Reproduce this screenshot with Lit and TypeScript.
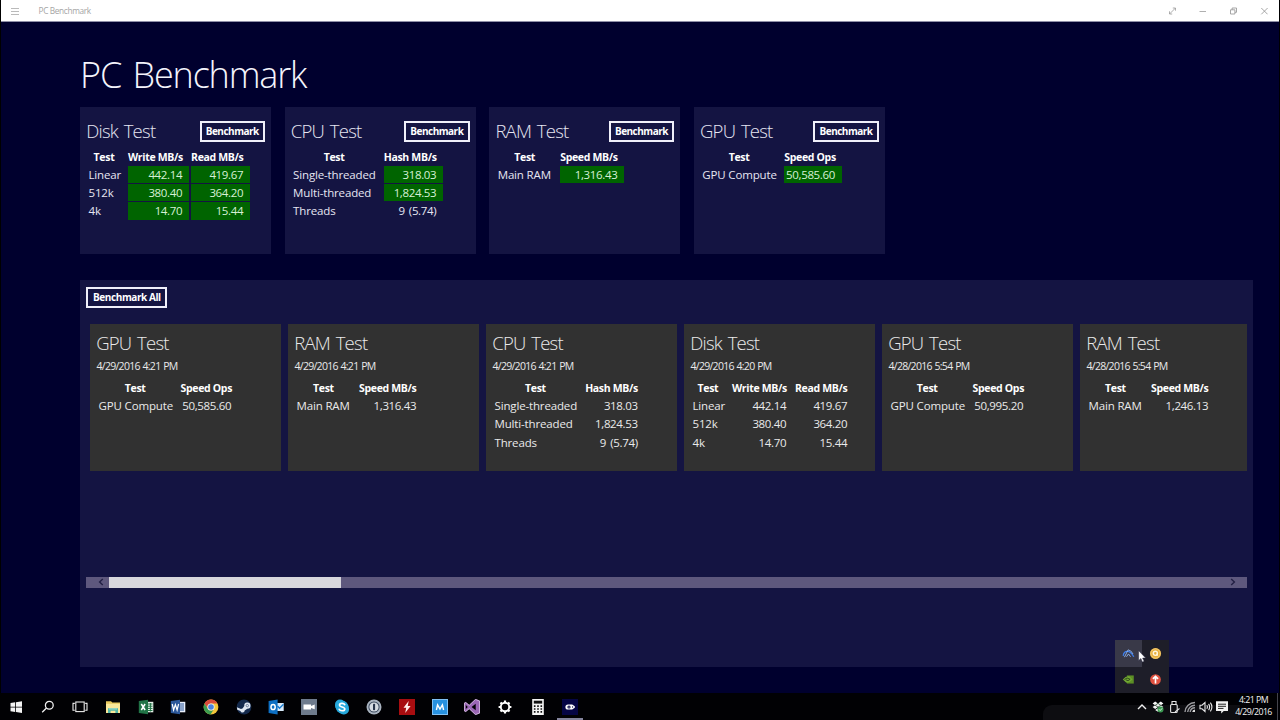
import { LitElement, html, css, svg, nothing } from "lit";
import { customElement, property } from "lit/decorators.js";
import { classMap } from "lit/directives/class-map.js";

type Kind = "disk" | "cpu" | "ram" | "gpu";
interface Row { label: string; values: string[]; plain?: boolean; }
interface Result { kind: Kind; title: string; date?: string; heads: string[]; rows: Row[]; }

const disk: Result = {
  kind: "disk", title: "Disk Test", heads: ["Write MB/s", "Read MB/s"],
  rows: [
    { label: "Linear", values: ["442.14", "419.67"] },
    { label: "512k", values: ["380.40", "364.20"] },
    { label: "4k", values: ["14.70", "15.44"] },
  ],
};
const cpu: Result = {
  kind: "cpu", title: "CPU Test", heads: ["Hash MB/s"],
  rows: [
    { label: "Single-threaded", values: ["318.03"] },
    { label: "Multi-threaded", values: ["1,824.53"] },
    { label: "Threads", values: ["9 (5.74)"], plain: true },
  ],
};
const ram = (v: string): Result => ({
  kind: "ram", title: "RAM Test", heads: ["Speed MB/s"], rows: [{ label: "Main RAM", values: [v] }],
});
const gpu = (v: string): Result => ({
  kind: "gpu", title: "GPU Test", heads: ["Speed Ops"], rows: [{ label: "GPU Compute", values: [v] }],
});

const current = [disk, cpu, ram("1,316.43"), gpu("50,585.60")];
const history: Result[] = [
  { ...gpu("50,585.60"), date: "4/29/2016 4:21 PM" },
  { ...ram("1,316.43"), date: "4/29/2016 4:21 PM" },
  { ...cpu, date: "4/29/2016 4:21 PM" },
  { ...disk, date: "4/29/2016 4:20 PM" },
  { ...gpu("50,995.20"), date: "4/28/2016 5:54 PM" },
  { ...ram("1,246.13"), date: "4/28/2016 5:54 PM" },
];

@customElement("result-card")
class ResultCard extends LitElement {
  @property({ attribute: false }) result!: Result;

  static styles = css`
    :host { display: block; flex: none; width: 191px; height: 146.5px; box-sizing: border-box; }
    .card { height: 100%; background: #141442; color: #e6e6f2; }
    .card.past { background: #313131; color: #eaeaea; }
    .top { display: flex; justify-content: space-between; align-items: center; height: 21px; padding: 13.5px 6px 0 6.2px; }
    .past .top { padding-top: 8px; }
    .title { font-size: 18.5px; font-weight: 300; line-height: 21px; letter-spacing: -0.75px; word-spacing: 1.6px; white-space: nowrap; margin-bottom: 1.4px; }
    .past .title { margin-bottom: 0; }
    .btn { box-sizing: border-box; width: 65.5px; height: 21px; border: 2px solid #f0f0fa; color: #fff; font: 700 10px/17px "Open Sans", sans-serif; letter-spacing: -0.5px; text-align: center; padding: 0; background: none; }
    .date { font-size: 10.5px; letter-spacing: -0.72px; word-spacing: 0.8px; line-height: 14px; padding: 6.2px 0 0 6.5px; }
    .table { display: grid; grid-template-rows: 15.5px; grid-auto-rows: 17.3px; row-gap: 1px; column-gap: 2px; padding-top: 7.8px; font-size: 11.5px; letter-spacing: -0.15px; line-height: 17.3px; white-space: nowrap; }
    .past .table { padding-top: 7.4px; }
    .disk { grid-template-columns: 46px 61px 59px; }
    .cpu { grid-template-columns: 97px 59.5px; }
    .ram { grid-template-columns: 69px 64px; }
    .gpu { grid-template-columns: 88.5px 57.5px; }
    .head { font-weight: 700; font-size: 10.5px; letter-spacing: -0.32px; line-height: 17px; text-align: right; padding-right: 6.5px; color: #fff; }
    .past .head { line-height: 15.5px; }
    .head.first { text-align: center; padding: 0 0 0 2px; }
    .label { padding-left: 8.5px; }
    .num { text-align: right; padding-right: 6.8px; letter-spacing: -0.35px; word-spacing: 1.6px; }
    .good { background: #006400; color: #d6f0d6; }
  `;

  render() {
    const r = this.result;
    const past = !!r.date;
    return html`<div class=${classMap({ card: true, past })}>
      <div class="top"><div class="title">${r.title}</div>${past ? nothing : html`<button class="btn">Benchmark</button>`}</div>
      ${past ? html`<div class="date">${r.date}</div>` : nothing}
      <div class="table ${r.kind}">
        <div class="head first">Test</div>
        ${r.heads.map((h) => html`<div class="head">${h}</div>`)}
        ${r.rows.map((row) => html`<div class="label">${row.label}</div>${row.values.map(
          (v) => html`<div class=${classMap({ num: true, good: !past && !row.plain })}>${v}</div>`)}`)}
      </div>
    </div>`;
  }
}

const icon = (body: unknown, size = 16) =>
  html`<svg width=${size} height=${size} viewBox="0 0 16 16" fill="none">${body}</svg>`;

const apps = [
  svg`<path fill="#f4f4f4" d="M2.5 4 7.2 3.3V7.7H2.5ZM8 3.2 14 2.3V7.7H8ZM2.5 8.5H7.2V13L2.5 12.3ZM8 8.5H14V13.9L8 13.1Z"/>`,
  svg`<g stroke="#f0f0f0" stroke-width="1.3"><circle cx="9.3" cy="6.2" r="3.9"/><path d="M6.5 9 2.2 13.3"/></g>`,
  svg`<g stroke="#ececec" stroke-width="1.1"><rect x="3.8" y="3" width="8.4" height="9.6"/><path d="M2.8 4.4H1V11.3H2.8M13.2 4.4H15V11.3H13.2"/></g>`,
  svg`<path fill="#e9c95c" d="M1 2.2H6L7.3 3.5H15V14H1Z"/><path fill="#fae89a" d="M1 4.8H15V14H1Z"/><path fill="#54b8a8" d="M3 9.3H13V14H10.4V11.8H5.6V14H3Z"/><path fill="#9fdccb" d="M4 9.3H12V10.5H4Z"/>`,
  svg`<path fill="#e8f3eb" d="M9 2.8H15.3V13.3H9Z"/><path stroke="#217346" d="M10 5H14.5M10 7.2H14.5M10 9.4H14.5M10 11.5H14.5M12.4 4V12.5"/><path fill="#217346" d="M.8 2 10 .7V15.3L.8 14Z"/><path stroke="#fff" stroke-width="1.5" d="m3.3 5 3.8 6M7.1 5l-3.8 6"/>`,
  svg`<path fill="#e8eefb" d="M9 2.8H15.3V13.3H9Z"/><path stroke="#2b579a" d="M10 5H14M10 7H14M10 9H14M10 11H14"/><path fill="#2b579a" d="M.8 2 10 .7V15.3L.8 14Z"/><path stroke="#fff" stroke-width="1.2" d="m2.2 5 1.4 6 1.8-5.4 1.7 5.4L8.6 5"/>`,
  svg`<circle cx="8" cy="8" r="7.4" fill="#f3c63b"/><path fill="#d94a3d" d="M1.5 4.4A7.4 7.4 0 0 1 14.5 4.4H8A3.6 3.6 0 0 0 4.8 9.7Z"/><path fill="#3b9c50" d="M1.5 4.4A7.4 7.4 0 0 0 7.5 15.4L11 10A3.6 3.6 0 0 1 4.8 9.7Z"/><circle cx="8" cy="8" r="3.6" fill="#f4f4f4"/><circle cx="8" cy="8" r="2.8" fill="#4a83df"/>`,
  svg`<circle cx="8" cy="8" r="7.4" fill="#142a4d"/><path fill="#dfe7f2" d="M.9 8.2 5 10a2.3 2.3 0 0 1 1.5-.5L8.3 7A3.1 3.1 0 1 1 11.3 9.7L8.7 11.6A2.2 2.2 0 0 1 4.4 12L1.3 10.7Z"/><circle cx="11.3" cy="6.6" r="1.2" stroke="#4a5f80" stroke-width=".7"/>`,
  svg`<path fill="#d8eafa" d="M8 4H15.7V12H8Z"/><path stroke="#1479cf" stroke-width="1.3" d="m9.5 7 2 2.2 4-4"/><path fill="#0d70c4" d="M.6 2 9.6.6V15.4L.6 14Z"/><ellipse cx="5.1" cy="8" rx="2.1" ry="2.6" stroke="#fff" stroke-width="1.5"/>`,
  svg`<path fill="#6e7b8d" d="M0 0H16V16H0Z"/><path fill="#fff" d="M2.5 5.5H10V7L13.7 5.5V10.3L10 9V10.5H2.5Z"/>`,
  svg`<rect x="1" y=".5" width="10" height="11" rx="5" fill="#27a9dc"/><rect x="4.5" y="4.5" width="10.5" height="11" rx="5" fill="#27a9dc"/><circle cx="8" cy="8" r="6.4" fill="#27a9dc"/><path stroke="#fff" stroke-width="1.7" stroke-linecap="round" d="M10.7 5.6C9.8 3.8 5.5 4 5.5 6.2 5.5 8.5 10.8 7.6 10.8 10 10.8 12.3 6 12.3 5.2 10.3"/>`,
  svg`<circle cx="8" cy="8" r="7.5" fill="#a9b3c0"/><circle cx="8" cy="8" r="5.6" fill="#3c4a5e"/><circle cx="8" cy="8" r="4.6" fill="#d5dbe3"/><rect x="7" y="4.8" width="2.1" height="6.4" rx=".7" fill="#27344a"/>`,
  svg`<path fill="#a80d10" d="M0 0H16V16H0Z"/><path fill="#fff0ec" d="M9.7 2 4.5 8.7H7.2L6.2 14 11.6 7.1H8.7Z"/>`,
  svg`<path fill="#2791e0" d="M0 0H16V16H0Z"/><path stroke="#b9deff" stroke-width=".7" d="M.4.4H15.6V15.6H.4Z"/><path stroke="#fff" stroke-width="1.4" d="M4.4 11 5.6 5.8 8 10 10.4 5.8 11.6 11"/>`,
  svg`<path fill="#9b67b5" fill-rule="evenodd" d="M11.5 0 16 1.8V14.2L11.5 16 5.2 10.1 1.7 13 0 12.1V3.9L1.7 3 5.2 5.9ZM11.7 4.7 7.6 8 11.7 11.3ZM1.8 5.9V10.1L3.8 8Z"/><path stroke="#e4d3ed" stroke-width=".7" d="M11.5.4 15.6 2V14L11.5 15.6 5.2 9.7 1.7 12.6.4 11.9V4.1L1.7 3.4 5.2 6.3Z"/>`,
  svg`<circle cx="8" cy="8" r="4.2" stroke="#fff" stroke-width="1.9"/><path stroke="#fff" stroke-width="2.2" d="M8 1.6V4M8 12V14.4M1.6 8H4M12 8H14.4M3.5 3.5 5.1 5.1M10.9 10.9l1.6 1.6M12.5 3.5 10.9 5.1M5.1 10.9 3.5 12.5"/>`,
  svg`<path fill="#f4f4f4" d="M2.2 0H13.8V16H2.2Z"/><path fill="#111" d="M3.8 1.7H12.2V4.6H3.8Z"/><path stroke="#111" stroke-width="1.6" stroke-dasharray="1.6 1.7" d="M3.9 7.1H12.4M3.9 10H12.4M3.9 12.9H12.4"/>`,
  svg`<path fill="#050544" d="M0 0H16V16H0Z"/><path fill="#fff" d="M6 5.4H10.2L12.8 7.2V8.8L10.2 10.6H6A2.6 2.6 0 0 1 6 5.4Z"/><circle cx="7" cy="8" r="1.6" fill="#050544"/><circle cx="7" cy="8" r=".6" fill="#fff"/><path stroke="#050544" stroke-width=".8" d="M10.6 7.2V8.8"/>`,
];

@customElement("app-root")
class AppRoot extends LitElement {
  static styles = css`
    :host { display: block; width: 1280px; height: 720px; overflow: hidden; background: #000; font-family: "Open Sans", "Noto Sans", sans-serif; }
    svg { display: block; flex: none; }
    .screen { position: relative; display: flex; flex-direction: column; height: 720px; }
    .window { display: flex; flex-direction: column; height: 693px; margin: 0 1px; background: #00002e; }
    .bar { display: flex; align-items: center; box-sizing: border-box; height: 22px; background: #fff; border-bottom: 1px solid #9090a8; color: #a5a5a5; }
    .name { flex: 1; padding-left: 18.5px; font-size: 8.3px; letter-spacing: -0.36px; }
    .menu { margin-left: 9px; }
    .ctl { display: flex; width: 30.7px; justify-content: center; }
    h1 { margin: 30px 0 0 79px; height: 55px; font-size: 36px; line-height: 46px; font-weight: 300; color: #f4f4fc; letter-spacing: -1.18px; word-spacing: 3.4px; white-space: nowrap; }
    .tests { display: flex; gap: 13.6px; margin-left: 79px; }
    .panel { width: 1173px; box-sizing: border-box; height: 386.5px; margin: 26.5px 0 0 79px; padding: 6.5px 6px 0 6.4px; background: #141442; display: flex; flex-direction: column; }
    .all { box-sizing: border-box; width: 81px; height: 21.5px; border: 2px solid #f0f0fa; background: none; color: #fff; padding: 0; text-align: center; font: 700 10px/17px "Open Sans", sans-serif; letter-spacing: -0.42px; }
    .history { display: flex; gap: 7px; height: 147px; margin-top: 16px; padding-left: 3.6px; overflow: hidden; }
    .scroll { display: flex; align-items: center; margin-top: 105.5px; height: 11px; background: #5e587d; }
    .arrow { display: flex; width: 22.5px; justify-content: center; box-sizing: border-box; padding-left: 6px; }
    .arrow.end { padding: 0 6px 0 0; }
    .thumb { width: 232px; height: 11px; background: #d8d7dd; }
    .rest { flex: 1; }
    .taskbar { display: flex; align-items: center; height: 27px; background: #010104; }
    .apps { display: flex; height: 27px; flex: 1; }
    .app { display: flex; justify-content: center; align-items: center; width: 32.67px; height: 27px; box-sizing: border-box; flex: none; }
    .app.start { width: 31.5px; }
    .app.on { border-bottom: 2px solid #85859e; padding-top: 2px; width: 26px; margin-left: 3px; }
    .tray { display: flex; align-items: center; height: 27px; }
    .ghost { position: absolute; left: 1043px; top: 705px; width: 197px; height: 15px; border-radius: 9px 0 0 0; background: #0d0d11; }
    .cell { position: relative; width: 16.1px; display: flex; justify-content: center; }
    .clock { position: relative; width: 46px; color: #f2f2f2; font-size: 8.8px; line-height: 11.5px; text-align: center; letter-spacing: -0.55px; white-space: nowrap; }
    .edge { width: 1px; height: 27px; margin: 0 2.5px 0 0; background: #44444c; }
    .flyout { position: absolute; left: 1115px; top: 640px; display: grid; grid-template-columns: 27px 27px; grid-auto-rows: 26.5px; background: #1e1e29; }
    .slot { display: flex; align-items: center; justify-content: center; }
    .slot.hot { background: #393948; }
    .cursor { position: absolute; left: 1138px; top: 650px; }
  `;

  render() {
    return html`<div class="screen">
      <div class="window">
        <div class="bar">
          <svg class="menu" width="10" height="8" stroke="#a8a8a8" stroke-width=".8"><path d="M1 1.5H9M1 4.5H9M1 7.5H9"/></svg>
          <div class="name">PC Benchmark</div>
          <div class="ctl"><svg width="8" height="8" fill="none" stroke="#9a9a9a" stroke-width=".8"><path d="M1.5 7 7.5 1M4.8 1H7.5V3.7M1.5 4.3V7H4.2"/></svg></div>
          <div class="ctl"><svg width="8" height="8" stroke="#9a9a9a" stroke-width=".8"><path d="M1.5 4.5H8"/></svg></div>
          <div class="ctl"><svg width="8" height="8" fill="none" stroke="#909090" stroke-width=".8"><path d="M1.5 2.8H5.9V7H1.5ZM3.1 2.8V1H7.5V5.3H5.9"/></svg></div>
          <div class="ctl"><svg width="8" height="8" stroke="#909090" stroke-width=".8"><path d="M1.3 1 7.6 7.3M7.6 1 1.3 7.3"/></svg></div>
        </div>
        <h1>PC Benchmark</h1>
        <div class="tests">${current.map((r) => html`<result-card .result=${r}></result-card>`)}</div>
        <div class="panel">
          <button class="all">Benchmark All</button>
          <div class="history">${history.map((r) => html`<result-card .result=${r}></result-card>`)}</div>
          <div class="scroll">
            <div class="arrow"><svg width="6" height="8" fill="none" stroke="#222044" stroke-width="1.4"><path d="M4.8 1 1.6 4 4.8 7"/></svg></div>
            <div class="thumb"></div><div class="rest"></div>
            <div class="arrow end"><svg width="6" height="8" fill="none" stroke="#222044" stroke-width="1.4"><path d="M1.2 1 4.4 4 1.2 7"/></svg></div>
          </div>
        </div>
      </div>
      <div class="taskbar">
        <div class="apps">${apps.map((a, i) => html`<div class=${classMap({ app: true, start: i === 0, on: i === apps.length - 1 })}>${icon(a)}</div>`)}</div>
        <div class="tray">
          <div class="ghost"></div>
          <div class="cell">${icon(svg`<path stroke="#eee" stroke-width="1.4" d="M4 10 8 6 12 10"/>`)}</div>
          <div class="cell">${icon(svg`<path fill="#f4f4f4" d="M5.2 2.5 8 4.4 10.8 2.5 13.4 4.4 10.8 6.3 13.4 8.1 10.8 10 8 8.1 5.2 10 2.6 8.1 5.2 6.3 2.6 4.4Z"/><path fill="#fff" d="M5.2 11 8 9.2 10.8 11 8 12.8Z"/><circle cx="10.5" cy="10.4" r="3" fill="#3b9851"/><path stroke="#dff5e2" d="m9 10.3 1.2 1.2 2-2.2"/><path stroke="#20402a" stroke-width=".8" d="m5.2 6.3 2.8-1.9 2.8 1.9L8 8.1Z"/>`)}</div>
          <div class="cell">${icon(svg`<g stroke="#e2e2e2" stroke-width="1.1"><path d="M6 5.5V2.5H10V5.5"/><rect x="4.6" y="5.5" width="6.6" height="8" rx="1"/><path d="M9 13 13.5 9.5"/></g>`)}</div>
          <div class="cell">${icon(svg`<g stroke="#9c9ca0" stroke-width="1.4"><path d="M3 13A10 10 0 0 1 13 3.5M5.7 13A7.3 7.3 0 0 1 13 6.2M8.2 13A4.8 4.8 0 0 1 13 8.7"/></g><path fill="#ddd" d="M10.2 13A2.8 2.8 0 0 1 13 10.5V13Z"/>`)}</div>
          <div class="cell">${icon(svg`<g stroke="#e8e8e8" stroke-width="1.1"><path d="M2 6.2H4L7 3.5V12.5L4 9.8H2Z"/><path d="M8.8 6.2Q10 8 8.8 9.8M10.6 4.9Q12.6 8 10.6 11.1M12.4 3.6Q15.4 8 12.4 12.4"/></g>`)}</div>
          <div class="cell">${icon(svg`<path fill="#f2f2f2" d="M2 2.2H14V12H9.7L7.2 14.4V12H2Z"/><path stroke="#222" stroke-width="1" d="M4 5.2H12M4 7.3H12M4 9.4H9.5"/>`)}</div>
          <div class="clock">4:21 PM<br>4/29/2016</div>
          <div class="edge"></div>
        </div>
      </div>
      <div class="flyout">
        <div class="slot hot">${icon(svg`<g stroke="#3f80ee" stroke-width="1.6"><path d="M1.5 11Q2.2 5.5 6.5 5.5T14.5 12"/></g><path stroke="#9cc3ff" d="M3 12.5 7.5 3.5Q11 3.8 13.5 8.5M5.5 12 8 8.5 10.5 12"/>`, 13)}</div>
        <div class="slot">${icon(svg`<circle cx="8" cy="8" r="6.8" fill="#e8ae3c"/><circle cx="8" cy="8" r="5.8" stroke="#f7d98a"/><circle cx="7.8" cy="7.8" r="2.5" stroke="#fff6dc" stroke-width="1.8"/><path stroke="#fff6dc" stroke-width="1.5" d="M10 8V11"/>`, 13)}</div>
        <div class="slot">${icon(svg`<path fill="#5c8f25" d="M6 3H14.5V13H6Z"/><path fill="#72a733" d="M1 8Q4.5 3.5 9.5 4.2L13 8Q9 12.5 5 11.8Z"/><path stroke="#253d18" d="M3 8Q6 4.5 10 7.7 7.5 11 4.8 8.4"/>`, 13)}</div>
        <div class="slot">${icon(svg`<circle cx="8" cy="8" r="6.6" fill="#df5140"/><path stroke="#fff" stroke-width="2" d="M8 13V4.5M4.8 7.3 8 4.2 11.2 7.3"/>`, 13)}</div>
      </div>
      <svg class="cursor" width="9" height="13"><path fill="#fff" stroke="#33334a" stroke-width=".5" d="M.7.7V10.4L2.9 8.5 4.4 12.1 6.1 11.3 4.6 8H7.6Z"/></svg>
    </div>`;
  }
}
